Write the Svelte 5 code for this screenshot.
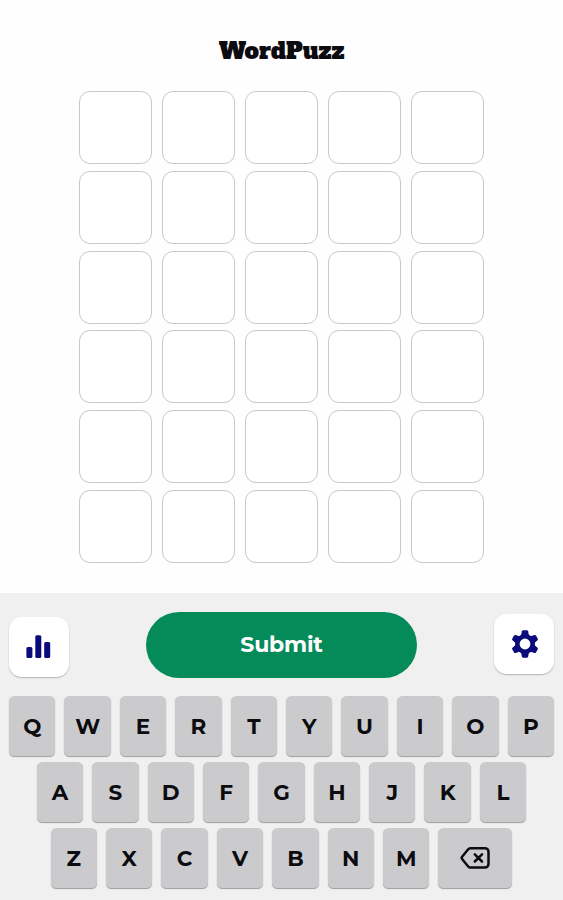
<script lang="ts">
  const ROWS = 6;
  const COLS = 5;
  const keyRows = ["QWERTYUIOP", "ASDFGHJKL", "ZXCVBNM"].map((row) => row.split(""));

  let guesses: string[] = $state(Array(ROWS).fill(""));
  let current = $state(0);

  function press(key: string) {
    if (current < ROWS && guesses[current].length < COLS) guesses[current] += key;
  }

  function erase() {
    if (current < ROWS) guesses[current] = guesses[current].slice(0, -1);
  }

  function submit() {
    if (current < ROWS && guesses[current].length === COLS) current += 1;
  }
</script>

<div class="app">
  <h1 class="title">WordPuzz</h1>

  <div class="board">
    {#each guesses as guess}
      {#each Array(COLS) as _, col}
        <div class="cell">{guess[col] ?? ""}</div>
      {/each}
    {/each}
  </div>

  <div class="panel">
    <div class="actions">
      <button type="button" class="tool stats" aria-label="Statistics">
        <svg width="26" height="26" viewBox="0 0 26 26" fill="#0b0b7c">
          <rect x="0.4" y="13" width="6" height="11" rx="1.5" />
          <rect x="9.3" y="1.2" width="6" height="22.8" rx="1.5" />
          <rect x="18.2" y="8" width="6" height="16" rx="1.5" />
        </svg>
      </button>
      <button type="button" class="submit" onclick={submit}>Submit</button>
      <button type="button" class="tool settings" aria-label="Settings">
        <svg width="28" height="30" viewBox="-14 -15 28 30" fill="#0b0b7c">
          {#each [0, 60, 120, 180, 240, 300] as angle}
            <path transform="rotate({angle})" d="M-4-8L-3.1-12.7Q-2.8-13.7-1.8-13.7h3.6Q2.8-13.7 3.1-12.7L4-8z" />
          {/each}
          <circle r="7.7" fill="none" stroke="#0b0b7c" stroke-width="4.6" />
        </svg>
      </button>
    </div>

    <div class="keyboard">
      {#each keyRows as row, i}
        <div class="key-row">
          {#each row as key}
            <button type="button" class="key" onclick={() => press(key)}>{key}</button>
          {/each}
          {#if i === keyRows.length - 1}
            <button type="button" class="key wide" aria-label="Delete" onclick={erase}>
              <svg width="32" height="24" viewBox="0 0 32 24" fill="none" stroke="#0c0c10" stroke-width="2.5" stroke-linecap="round" stroke-linejoin="round">
                <path d="M11.5 2.2h14.5a3.5 3.5 0 0 1 3.5 3.5v12.4a3.5 3.5 0 0 1-3.5 3.5H11.5q-1.4 0-2.3-1.1L3.3 13.3q-1.2-1.4 0-2.8L9.2 3.3Q10.1 2.2 11.5 2.2z" />
                <path d="M15.8 8.3l7.2 7.2M23 8.3L15.8 15.5" />
              </svg>
            </button>
          {/if}
        </div>
      {/each}
    </div>
  </div>
</div>

<style>
  :global(body) {
    margin: 0;
    background: #fefefe;
  }
  .app {
    display: flex;
    flex-direction: column;
    align-items: center;
    width: 563px;
    height: 900px;
    overflow: hidden;
    font-family: Montserrat, Inter, sans-serif;
    color: #0c0c10;
  }
  .title {
    margin: 35px 0 0;
    height: 56px;
    font-family: "Alfa Slab One", "DejaVu Serif", serif;
    font-size: 22.8px;
    font-weight: 400;
    line-height: 32px;
  }
  .board {
    display: grid;
    grid-template-columns: repeat(5, 73px);
    grid-auto-rows: 73px;
    gap: 6.75px 10.15px;
  }
  .cell {
    display: flex;
    align-items: center;
    justify-content: center;
    box-sizing: border-box;
    border: 1.5px solid #c8c8c8;
    border-radius: 11px;
    background: #fff;
    font-size: 34px;
    font-weight: 700;
  }
  .panel {
    box-sizing: border-box;
    width: 100%;
    height: 307.5px;
    margin-top: auto;
    padding: 19.5px 9px 0;
    background: #f0f0f0;
  }
  .actions {
    display: flex;
    justify-content: space-between;
    align-items: flex-start;
    height: 83.5px;
  }
  button {
    display: flex;
    align-items: center;
    justify-content: center;
    padding: 0;
    border: none;
    font-family: inherit;
    color: inherit;
    cursor: pointer;
  }
  .tool {
    width: 60px;
    height: 60px;
    border-radius: 13px;
    background: #fff;
    box-shadow: 0 1px 1.5px rgba(0, 0, 0, 0.25);
  }
  .stats {
    margin-top: 5px;
  }
  .settings {
    margin-top: 2px;
  }
  .settings svg {
    margin-left: 1px;
  }
  .submit {
    width: 271px;
    height: 66px;
    border-radius: 33px;
    background: #058a5a;
    color: #fff;
    font-size: 22px;
    font-weight: 700;
    letter-spacing: -0.2px;
    padding-bottom: 1px;
  }
  .keyboard {
    display: flex;
    flex-direction: column;
    gap: 6.4px;
  }
  .key-row {
    display: flex;
    justify-content: center;
    gap: 9px;
  }
  .key {
    width: 46.4px;
    height: 60px;
    border-radius: 5.5px;
    background: #cbcbcd;
    box-shadow: 0 1px 1px rgba(0, 0, 0, 0.35);
    font-size: 21.5px;
    font-weight: 700;
  }
  .wide {
    width: 74px;
  }
</style>
